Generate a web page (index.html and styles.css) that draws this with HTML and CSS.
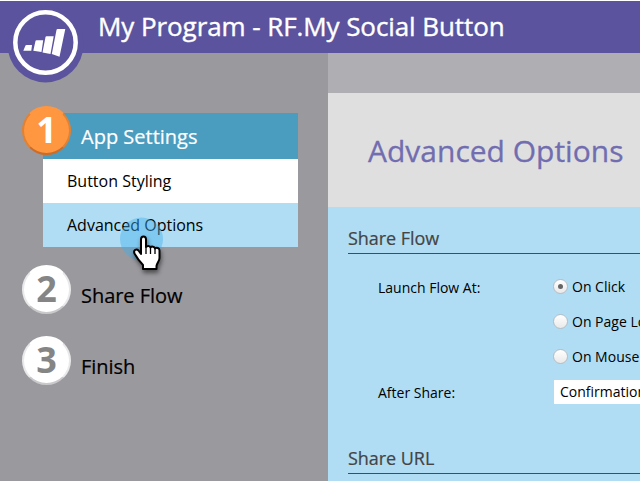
FILE: index.html
```
<!DOCTYPE html>
<html lang="en">
<head>
<meta charset="utf-8">
<title>My Program</title>
<link rel="stylesheet" href="styles.css">
</head>
<body>
<div class="app">
  <header class="header">
    <svg class="logo" width="78" height="78" viewBox="0 0 78 78">
      <circle cx="38.500" cy="38.500" r="38" fill="#5b539e"/>
      <circle cx="38.500" cy="36.500" r="30.200" fill="none" stroke="#fff" stroke-width="4.500"/>
      <path fill="#fff" d="M18.500 39.500q.2-.5 1-.5h5.500l-.7 5.700h-8zM28.500 35q.2-.8 1-.8h6.700l-1.700 11.800-8.200-1.200zM38.500 31q.2-.8 1-.8h7.200L43.500 48l-8-1.500zM49.500 24q.2-.9 1.100-.9h7.700L52.500 50.700l-7.700-2.700z"/>
    </svg>
    <h1 class="title">My Program - RF.My Social Button</h1>
  </header>
  <div class="body">
    <nav class="sidebar">
      <section class="settings">
        <div class="step step-active"><span class="num num-active">1</span><span class="step-name">App Settings</span></div>
        <a class="item">Button Styling</a>
        <a class="item item-active">Advanced Options</a>
      </section>
      <div class="step step-share"><span class="num">2</span><span class="step-name">Share Flow</span></div>
      <div class="step step-finish"><span class="num">3</span><span class="step-name">Finish</span></div>
    </nav>
    <main class="main">
      <div class="banner"><h2 class="heading">Advanced Options</h2></div>
      <div class="form">
        <h3 class="section">Share Flow</h3>
        <div class="row launch">
          <span class="label">Launch Flow At:</span>
          <div class="choices">
            <label class="choice"><i class="radio checked"></i>On Click</label>
            <label class="choice"><i class="radio"></i>On Page Load</label>
            <label class="choice"><i class="radio"></i>On Mouse Over</label>
          </div>
        </div>
        <div class="row after">
          <span class="label">After Share:</span>
          <div class="select">Confirmation</div>
        </div>
        <h3 class="section second">Share URL</h3>
      </div>
    </main>
  </div>
  <svg class="pointer" width="60" height="70" viewBox="0 0 60 70">
    <circle cx="31.500" cy="30" r="21.500" fill="#42adea" fill-opacity=".43"/>
    <path class="hand" fill="#fff" stroke="#000" stroke-width="2" stroke-linejoin="round" d="M31 45V30.500c0-4 5-4 5 0V38c1-1.500 4-1.500 4.500.5 1-1.500 4-1 4.500 1 1.500-1.500 4.500-.5 4.500 2V49c0 3-2.500 5-3 8v3H33v-4c-3-3-6-7-8.500-11.500-1.500-3.500 2-5 4-3z"/>
    <path fill="none" stroke="#000" stroke-width="1.300" d="M36 38v7M40.500 38.500V45M45 40V45"/>
  </svg>
</div>
</body>
</html>
```
FILE: styles.css
```
* { box-sizing: border-box; }
body { margin: 0; background: #fff; font-family: "Open Sans", sans-serif; color: #000; overflow: hidden; }
h1, h2, h3 { margin: 0; font-weight: 400; white-space: nowrap; }
.app { position: relative; width: 640px; height: 481px; padding-top: 1px; display: flex; flex-direction: column; overflow: hidden; }
.header { height: 52px; flex: none; display: flex; align-items: flex-start; padding-left: 7px; background: #5b539e; color: #fff; position: relative; z-index: 1; }
.logo { flex: none; margin-top: 5px; }
.title { margin-left: 13px; font-size: 26px; line-height: 50px; letter-spacing: -.08px; -webkit-text-stroke: .4px #fff; }
.body { flex: 1; display: flex; min-height: 0; }
.sidebar { width: 328px; flex: none; background: #9a999e; padding-top: 60px; }
.settings { margin: 0 30px 0 43px; }
.step { display: flex; align-items: center; height: 46px; font-size: 20px; -webkit-text-stroke: .2px currentColor; }
.step-active { background: #4b9dbf; color: #fff; }
.num { flex: none; width: 49px; height: 49px; border-radius: 50%; background: #fff; color: #858585; border: 2px solid #e9e9eb; border-top-color: #fff; border-bottom-color: #c9c9cc; font-weight: 700; font-size: 36px; line-height: 43px; text-align: center; -webkit-text-stroke: 0; }
.num-active { margin-left: -21px; margin-top: -12px; background: #ff9640; border-color: #e38131; border-top-color: #ff9640; border-bottom-color: #cb6c28; color: #fff; }
.step-name { margin-left: 10px; line-height: 28px; }
.step-active .step-name { padding-top: 2px; }
.step-share, .step-finish { height: 49px; padding-left: 22px; }
.step-share { margin-top: 18px; }
.step-finish { margin-top: 22px; }
.step-share .step-name, .step-finish .step-name { padding-top: 13px; letter-spacing: -.05px; }
.item { display: block; height: 44px; line-height: 44px; padding-left: 24px; font-size: 16px; background: #fff; }
.item-active { background: #b0ddf4; }
.main { flex: 1; min-width: 0; background: #afaeb3; padding-top: 40px; overflow: hidden; }
.banner { height: 114px; background: #dfdfdf; padding-left: 40px; }
.heading { color: #716db0; font-size: 30px; line-height: 116px; -webkit-text-stroke: .3px #716db0; }
.form { height: 274px; background: #b0ddf4; padding: 17px 0 0 20px; }
.section { height: 30px; line-height: 29px; font-size: 18px; color: #444; border-bottom: 1px solid #454b57; letter-spacing: -.05px; -webkit-text-stroke: .2px #444; }
.row { display: flex; padding-left: 30px; font-size: 14px; white-space: nowrap; }
.label { width: 175px; flex: none; line-height: 20px; }
.launch { margin-top: 24px; }
.choices { display: flex; flex-direction: column; gap: 15px; margin-top: -2px; }
.choice { display: flex; align-items: center; gap: 4px; height: 20px; }
.radio { width: 15px; height: 15px; border-radius: 50%; border: 1px solid #b5bdc3; background: linear-gradient(#fff, #e9e9e9); display: grid; place-items: center; }
.checked::after { content: ""; width: 5px; height: 5px; border-radius: 50%; background: #666; }
.after { margin-top: 14px; }
.after .label { line-height: 26px; width: 176px; }
.select { flex: none; width: 86px; overflow: hidden; height: 24px; line-height: 24px; padding-left: 6px; background: #fff; }
.second { margin-top: 38px; }
.pointer { position: absolute; left: 110px; top: 209px; }
.hand { filter: drop-shadow(1px 3px 2px rgba(0,0,0,.5)); }
```
